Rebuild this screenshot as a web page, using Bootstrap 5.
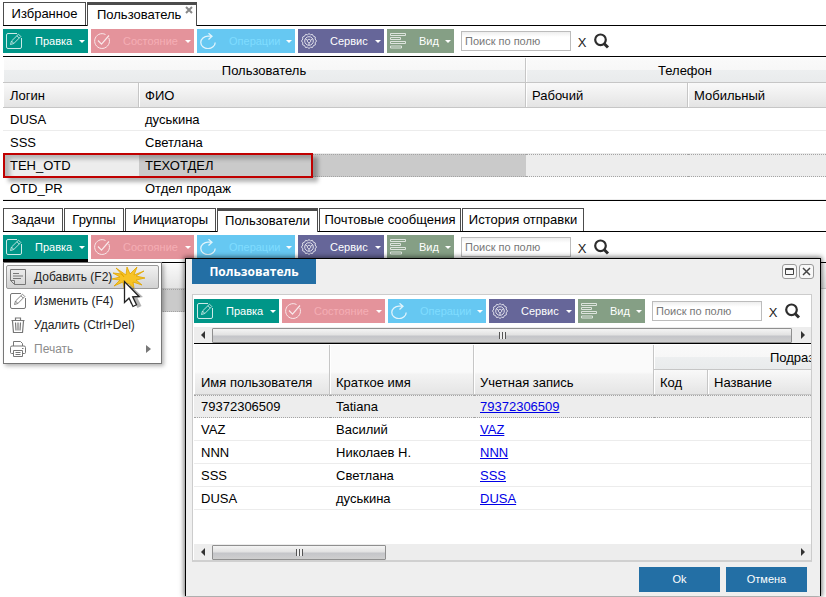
<!DOCTYPE html>
<html lang="ru">
<head>
<meta charset="utf-8">
<meta name="viewport" content="width=device-width, initial-scale=1">
<title>Пользователь</title>
<link href="https://cdn.jsdelivr.net/npm/bootstrap@5.3.0/dist/css/bootstrap.min.css" rel="stylesheet">
<style>
body{font:13px/18px "Liberation Sans",Arial,sans-serif;color:#000;background:#fff;min-height:100vh;overflow:hidden}
.workspace{padding:2px 0 0 3px}
/* page tabs */
.page-tabs{border-bottom:1px solid #000;gap:1px;height:24px}
.page-tab{height:23px;border:1px solid #4c4c4c;border-bottom:0;background:#fff;padding:0;font-size:13px;line-height:20px;color:#000;text-align:center;white-space:nowrap}
.page-tab.active{height:24px;border-top-width:3px;line-height:18px;padding-bottom:2px}
.tab-s{width:60px}.tab-m{width:83px}.tab-l{width:91px}.tab-xl{width:101px}.tab-mail{width:142px}.tab-hist{width:122px}
.tab-close{width:110px;text-align:left;padding-left:9px;position:relative}
.tab-x{position:absolute;right:3px;top:1px;width:8px;height:8px}
.sub-tabs{margin-top:7px}
/* toolbar */
.tools{gap:3px;padding:3px 0}
.tool{height:24px;border:0;border-radius:0;padding:0 3px;font-size:11px;line-height:24px;color:#fff;display:flex;align-items:center;text-align:left}
.tool svg{width:16px;height:16px;margin-right:13px;flex:none;opacity:.8}
.tool::after{content:"";margin-left:auto;border:3px solid transparent;border-top-color:#fff;border-bottom:0}
.tool:hover{color:#fff}
.t-edit{width:85px;background:#009688}
.t-state{width:103px;background:#e4939b;color:#f5aeb5}
.t-oper{width:98px;background:#66c8f2;color:#7fdcff}
.t-serv{width:86px;background:#666699}
.t-view{width:67px;background:#859f85}
.t-state:hover{color:#f5aeb5}.t-oper:hover{color:#7fdcff}
.t-edit.pressed{box-shadow:0 3px #000}
.find{width:110px;height:20px;border:1px solid #bcbcbc;border-radius:0;padding:0 3px;margin-left:4px;font-size:11px;line-height:18px;background:linear-gradient(#eee,#fff 5px)}
.find::placeholder{color:#777;opacity:1}
.clear,.seek{border:0;background:none;padding:0;line-height:16px}
.clear{width:10px;margin-left:3px;padding-top:4px;font-size:13px;color:#222}
.seek{width:16px;height:16px;margin-left:4px;display:flex}
/* grids */
.grid{width:100%;table-layout:fixed;border-collapse:separate;border-spacing:0;margin-top:1px}
.rule{border-top:1px solid #000}
.grid th{height:25px;padding:2px 6px 0;font-weight:400;border-right:1px solid #c6c6c6;border-bottom:1px solid #c6c6c6;background:linear-gradient(#f9f9f9,#e4e4e4);white-space:nowrap;overflow:hidden;box-shadow:inset 1px 0 #fff}
.grid th.group{background:linear-gradient(#fafafa 0,#f7f7f7 50%,#edeff0 50%,#e9ebec)}
.grid th.edge,.grid td:last-child{border-right:0}
.grid td{height:23px;padding:2px 6px 0;border-bottom:1px solid #ececec;white-space:nowrap;overflow:hidden}
.grid th.c0,.grid td:first-child{padding-left:7px}
.grid th.tall{background:linear-gradient(#fafafa 55%,#f3f3f3 60%,#e5e5e5);vertical-align:bottom;padding-bottom:2px}
.grid .focus-line td{background:#ededed;border-top:1px dotted #a4a4a4;border-bottom:1px dotted #a4a4a4;padding-top:0}
.grid .focus-line td.cell-on{background:#cacaca}
.grid a{color:#0000e6;text-decoration:underline}
.w136{width:136px}.w387{width:387px}.w162{width:162px}.w144{width:144px}.w180{width:180px}.w54{width:54px}
.grid th.phone{padding-left:24px}
.grid th.unit{padding-left:116px;text-align:left}
.frame-red{position:absolute;left:3px;top:153px;width:310px;height:25px;border:2px solid #c00000;box-shadow:5px 4px 4px rgba(0,0,0,.3),inset 5px 4px 4px rgba(0,0,0,.24);pointer-events:none}
/* menu */
.edit-menu{position:absolute;left:3px;top:262px;width:159px;padding:2px;border:1px solid #777;background:#fff;box-shadow:2px 2px 4px rgba(0,0,0,.3);z-index:5}
.edit-menu button{display:flex;align-items:center;width:100%;height:24px;border:1px solid transparent;background:none;padding:0 7px 0 3px;font-size:12px;line-height:22px;color:#222;text-align:left;white-space:nowrap}
.edit-menu svg{width:16px;height:16px;margin-right:8px;flex:none;color:#777}
.edit-menu .hot{border-color:#999;border-radius:2px;background:linear-gradient(#f1f1f1,#d2d2d2)}
.edit-menu .off{color:#8c8c8c}
.more{margin-left:auto;border:4px solid transparent;border-left:5px solid #777;border-right:0}
.pointer{position:absolute;left:108px;top:264px;width:44px;height:48px;z-index:6;pointer-events:none}
/* dialog */
.win{position:absolute;left:185px;right:5px;top:258px;padding:0 8px 4px 6px;border:1px solid #000;border-bottom:0;background:#efefef;box-shadow:0 0 5px 1px rgba(0,0,0,.55);z-index:4}
.win-head{height:35px}
.win-title{width:124px;height:25px;background:#236fa5;color:#fff;font:bold 12px/25px "Open Sans","DejaVu Sans",sans-serif;text-align:center}
.win-btn{width:15px;height:15px;border:1px solid #999;border-radius:3px;background:#f8f8f8;padding:0;display:flex;margin-top:5px}
.win-btns{gap:2px;margin-right:-2px}
.panel{border:1px solid #ccc;border-bottom:2px solid #d0d0d0;background:#fff;padding:1px 0 0 1px;overflow:hidden}
.panel .tools{padding-bottom:4px}
.sbar{height:16px;background:#ededed;display:flex;align-items:center;padding:0 6px 0 7px}
.arr{border:4px solid transparent;width:0;height:0}
.arr-l{border-right-color:#333;border-left:0;margin-right:7px}
.arr-r{border-left-color:#333;border-right:0;margin-left:auto}
.thumb{height:15px;border:1px solid #8f8f8f;border-radius:1px;background:linear-gradient(#f4f4f4,#e2e2e2 45%,#c4c5c9 55%,#cfcfcf);display:flex;align-items:center;justify-content:center}
.thumb::after{content:"";width:7px;height:7px;background:repeating-linear-gradient(90deg,#555 0 1px,#eee 1px 3px)}
.thumb-wide{flex:1;margin-right:9px}
.thumb-short{width:174px}
.blank{height:34px}
.win-foot{gap:6px;padding:5px 5px 0 0}
.act{width:81px;height:25px;border:0;border-radius:0;background:#236fa5;color:#fff;padding:0;font-size:11px;line-height:25px}
</style>
<script src="https://cdn.jsdelivr.net/npm/bootstrap@5.3.0/dist/js/bootstrap.bundle.min.js"></script>
</head>
<body>
<svg class="d-none" aria-hidden="true">
  <symbol id="i-edit" viewBox="0 0 16 16"><g fill="none" stroke="currentColor"><path d="M11 .5H2A1.500 1.500 0 0 0 .5 2v12A1.500 1.500 0 0 0 2 15.500h12a1.500 1.500 0 0 0 1.500-1.500V5"/><path d="M4.500 11.500l1-3.500L12.500 1.200l2.300 2.300-7 7zM5.500 8l2.300 2.500M11 2.800l2.300 2.300" stroke-width=".9"/></g></symbol>
  <symbol id="i-check" viewBox="0 0 16 16"><g fill="none" stroke="currentColor"><path d="M14.800 5A7.400 7.400 0 1 1 11.500 1.500"/><path d="M4 7.500l3.500 3.700L15 2.500" stroke-width="1.200"/></g></symbol>
  <symbol id="i-redo" viewBox="0 0 16 16"><g fill="none" stroke="currentColor" stroke-width="1.300"><path d="M15.200 9.500A7.200 6.200 0 1 1 8 3.200h3.500M8.500 .3l3.500 3-3.500 3.200"/></g></symbol>
  <symbol id="i-gear" viewBox="0 0 16 16"><g fill="none" stroke="currentColor"><path d="M8 .6l1.500 1.200 2-.4.8 1.800 2 .8-.2 2L15.500 8l-1.300 1.800.2 2-2 .8-.9 1.900-2-.3L8 15.500l-1.500-1.300-2 .3-.9-1.900-2-.8.200-2L.5 8l1.300-2-.2-2 2-.8.9-1.800 2 .4z"/><circle cx="8" cy="8" r="4.300"/><path d="M8 6.300a1.700 1.700 0 1 0 .1 0M4.300 6l2.200 1.200M11.700 6L9.500 7.200M8 10v2.300"/></g></symbol>
  <symbol id="i-view" viewBox="0 0 16 16"><path d="M.5.500h15v2H.5zM.5 4.500h10v2H.5zM.5 8.500h15v2H.5zM.5 13h11v2H.5z" fill="none" stroke="currentColor" stroke-width=".9"/></symbol>
  <symbol id="i-seek" viewBox="0 0 16 16"><g fill="none" stroke="#2d2d2d"><circle cx="6.500" cy="6.800" r="5.300" stroke-width="2.200"/><path d="M10 10.500l4 4" stroke-width="3"/></g></symbol>
  <symbol id="i-x" viewBox="0 0 8 8"><path d="M1 1l6 6M7 1L1 7" stroke="#888" stroke-width="2"/></symbol>
  <symbol id="i-note" viewBox="0 0 16 16"><path d="M.5.500h15v15H4.500L.5 11.500zM.5 11.500h4v4M3 4.500h6M3 7h10M3 9.500h8" fill="none" stroke="currentColor"/></symbol>
  <symbol id="i-bin" viewBox="0 0 16 16"><path d="M1.500 3.500h13M5.500 3V1h5v2M2.500 4l1 11.500h9l1-11.500M5.500 5.500l.5 8M8 5.500v8M10.500 5.500l-.5 8" fill="none" stroke="currentColor" stroke-width="1.200"/></symbol>
  <symbol id="i-print" viewBox="0 0 16 16"><path d="M3.500 5V.5h7l2 2V5M3.500 12.500h-2a1 1 0 0 1-1-1v-5a1.500 1.500 0 0 1 1.500-1.500h12a1.500 1.500 0 0 1 1.500 1.500v5a1 1 0 0 1-1 1h-2M3.500 9.500h9v6h-9zM5.500 11.500h5M5.500 13.500h5M12 7.500h1.500" fill="none" stroke="currentColor"/></symbol>
</svg>

<main class="workspace">
  <nav class="page-tabs d-flex" aria-label="Страницы">
    <button class="page-tab tab-m">Избранное</button>
    <button class="page-tab tab-close active">Пользователь<svg class="tab-x"><use href="#i-x"/></svg></button>
  </nav>
  <div class="tools d-flex align-items-center">
    <button class="btn tool t-edit"><svg><use href="#i-edit"/></svg>Правка</button>
    <button class="btn tool t-state"><svg class="text-white"><use href="#i-check"/></svg>Состояние</button>
    <button class="btn tool t-oper"><svg class="text-white"><use href="#i-redo"/></svg>Операции</button>
    <button class="btn tool t-serv"><svg><use href="#i-gear"/></svg>Сервис</button>
    <button class="btn tool t-view"><svg><use href="#i-view"/></svg>Вид</button>
    <input class="find" type="text" placeholder="Поиск по полю" aria-label="Поиск по полю">
    <button class="clear">X</button>
    <button class="seek" aria-label="Найти"><svg width="16" height="16"><use href="#i-seek"/></svg></button>
  </div>
  <div class="rule">
    <table class="grid">
      <colgroup><col class="w136"><col class="w387"><col class="w162"><col></colgroup>
      <thead>
        <tr><th class="group text-center" colspan="2">Пользователь</th><th class="group text-center phone edge" colspan="2">Телефон</th></tr>
        <tr><th class="c0">Логин</th><th>ФИО</th><th>Рабочий</th><th class="edge">Мобильный</th></tr>
      </thead>
      <tbody>
        <tr><td>DUSA</td><td>дуськина</td><td></td><td></td></tr>
        <tr><td>SSS</td><td>Светлана</td><td></td><td></td></tr>
        <tr class="focus-line"><td>TEH_OTD</td><td class="cell-on">ТЕХОТДЕЛ</td><td></td><td></td></tr>
        <tr><td>OTD_PR</td><td>Отдел продаж</td><td></td><td></td></tr>
      </tbody>
    </table>
  </div>
  <div class="rule">
    <nav class="page-tabs sub-tabs d-flex" aria-label="Связанные данные">
      <button class="page-tab tab-s">Задачи</button>
      <button class="page-tab tab-s">Группы</button>
      <button class="page-tab tab-l">Инициаторы</button>
      <button class="page-tab tab-xl active">Пользователи</button>
      <button class="page-tab tab-mail">Почтовые сообщения</button>
      <button class="page-tab tab-hist">История отправки</button>
    </nav>
  </div>
  <div class="tools d-flex align-items-center">
    <button class="btn tool t-edit pressed" aria-expanded="true"><svg><use href="#i-edit"/></svg>Правка</button>
    <button class="btn tool t-state"><svg class="text-white"><use href="#i-check"/></svg>Состояние</button>
    <button class="btn tool t-oper"><svg class="text-white"><use href="#i-redo"/></svg>Операции</button>
    <button class="btn tool t-serv"><svg><use href="#i-gear"/></svg>Сервис</button>
    <button class="btn tool t-view"><svg><use href="#i-view"/></svg>Вид</button>
    <input class="find" type="text" placeholder="Поиск по полю" aria-label="Поиск по полю">
    <button class="clear">X</button>
    <button class="seek" aria-label="Найти"><svg width="16" height="16"><use href="#i-seek"/></svg></button>
  </div>
  <div class="rule">
    <table class="grid">
      <colgroup><col class="w387"><col></colgroup>
      <thead><tr><th></th><th class="edge"></th></tr></thead>
      <tbody><tr class="focus-line"><td class="cell-on"></td><td class="bg-white border-0"></td></tr></tbody>
    </table>
  </div>
</main>

<div class="frame-red"></div>

<div class="edit-menu" role="menu">
  <button class="hot" role="menuitem"><svg><use href="#i-note"/></svg>Добавить (F2)</button>
  <button role="menuitem"><svg><use href="#i-edit"/></svg>Изменить (F4)</button>
  <button role="menuitem"><svg><use href="#i-bin"/></svg>Удалить (Ctrl+Del)</button>
  <button class="off" role="menuitem"><svg><use href="#i-print"/></svg>Печать<span class="more"></span></button>
</div>
<svg class="pointer" viewBox="0 0 44 48">
  <path d="M18 17L31 29l-5.500 1 4 8-4 2-4-8-3.500 4z" fill="#000" opacity=".3" transform="translate(4 4)"/>
  <path d="M16 13L8 4l10 7 1-8 3 7 7-7-3 8 10-4-8 5 9 2-9 2 6 5-9-3 1 6-6-5-4 5-1-6-9 4 6-6-8-1 8-2-7-4 9 1z" fill="#f7c325" stroke="#e0a400" stroke-width=".8"/>
  <path d="M16.500 17.500v21l4.500-4.300 4 8.300 3.500-1.700-3.800-8 6.300-.3z" fill="#fff" stroke="#222" stroke-width="1.300"/>
</svg>

<section class="win" role="dialog" aria-labelledby="win-title">
  <div class="win-head d-flex justify-content-between">
    <div class="win-title" id="win-title">Пользователь</div>
    <div class="win-btns d-flex">
      <button class="win-btn" aria-label="Развернуть"><svg width="13" height="13"><path d="M2.500 3.500h8v6h-8zM2.500 4.500h8" fill="none" stroke="#444"/></svg></button>
      <button class="win-btn" aria-label="Закрыть"><svg width="13" height="13"><path d="M3 3l7 7M10 3l-7 7" stroke="#444" stroke-width="1.500"/></svg></button>
    </div>
  </div>
  <div class="panel">
    <div class="tools d-flex align-items-center">
      <button class="btn tool t-edit"><svg><use href="#i-edit"/></svg>Правка</button>
      <button class="btn tool t-state"><svg class="text-white"><use href="#i-check"/></svg>Состояние</button>
      <button class="btn tool t-oper"><svg class="text-white"><use href="#i-redo"/></svg>Операции</button>
      <button class="btn tool t-serv"><svg><use href="#i-gear"/></svg>Сервис</button>
      <button class="btn tool t-view"><svg><use href="#i-view"/></svg>Вид</button>
      <input class="find" type="text" placeholder="Поиск по полю" aria-label="Поиск по полю">
      <button class="clear">X</button>
      <button class="seek" aria-label="Найти"><svg width="16" height="16"><use href="#i-seek"/></svg></button>
    </div>
    <div class="sbar"><span class="arr arr-l"></span><span class="thumb thumb-wide"></span><span class="arr arr-r"></span></div>
    <div class="rule">
      <table class="grid">
        <colgroup><col class="w136"><col class="w144"><col class="w180"><col class="w54"><col></colgroup>
        <thead>
          <tr><th class="tall c0" rowspan="2">Имя пользователя</th><th class="tall" rowspan="2">Краткое имя</th><th class="tall" rowspan="2">Учетная запись</th><th class="group unit edge" colspan="2">Подраз</th></tr>
          <tr><th>Код</th><th class="edge">Название</th></tr>
        </thead>
        <tbody>
          <tr class="focus-line"><td>79372306509</td><td>Tatiana</td><td><a href="#">79372306509</a></td><td></td><td></td></tr>
          <tr><td>VAZ</td><td>Василий</td><td><a href="#">VAZ</a></td><td></td><td></td></tr>
          <tr><td>NNN</td><td>Николаев Н.</td><td><a href="#">NNN</a></td><td></td><td></td></tr>
          <tr><td>SSS</td><td>Светлана</td><td><a href="#">SSS</a></td><td></td><td></td></tr>
          <tr><td>DUSA</td><td>дуськина</td><td><a href="#">DUSA</a></td><td></td><td></td></tr>
        </tbody>
      </table>
    </div>
    <div class="blank"></div>
    <div class="sbar"><span class="arr arr-l"></span><span class="thumb thumb-short"></span><span class="arr arr-r"></span></div>
  </div>
  <div class="win-foot d-flex justify-content-end">
    <button class="btn act">Ok</button>
    <button class="btn act">Отмена</button>
  </div>
</section>
</body>
</html>
